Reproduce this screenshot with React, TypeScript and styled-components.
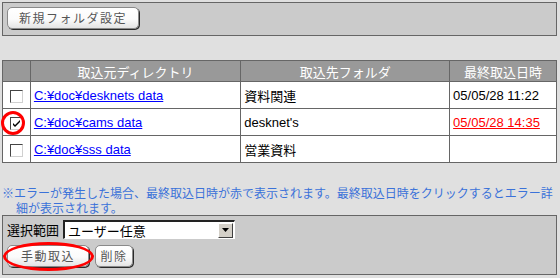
import { FC } from 'react';
import styled, { createGlobalStyle } from 'styled-components';

const GlobalStyle = createGlobalStyle`
	html, body {
		margin: 0;
		padding: 0;
		background: #e0e0e0;
	}
	body {
		font-family: 'Liberation Sans', 'Noto Sans CJK JP', sans-serif;
		font-size: 13px;
		color: #000;
	}
`;

const Page = styled.div`
	width: 560px;
	height: 278px;
	padding: 2px;
	box-sizing: border-box;
	display: flex;
	flex-direction: column;
`;

const Panel = styled.div<{ $gap?: number; $height: number }>`
	width: 555px;
	height: ${(p) => p.$height}px;
	flex-shrink: 0;
	box-sizing: border-box;
	border: 1px solid #666;
	background: #cbcbcb;
	padding: 4px 4px 0 4px;
	display: flex;
	flex-direction: column;
	gap: ${(p) => p.$gap ?? 0}px;
`;

const Row = styled.div<{ $gap: number }>`
	display: flex;
	align-items: center;
	gap: ${(p) => p.$gap}px;
`;

const Button = styled.button<{ $width: number }>`
	position: relative;
	width: ${(p) => p.$width}px;
	height: 22px;
	flex-shrink: 0;
	padding: 0;
	border: 1px solid #8a8a8a;
	border-radius: 5px;
	background: linear-gradient(#ffffff 0%, #fbfbfb 55%, #e4e4e4 100%);
	box-shadow: 1px 1px 0 #2a2a2a;
	font-family: 'Noto Sans CJK JP', sans-serif;
	font-size: 12px;
	letter-spacing: 1.5px;
	color: #555;
	line-height: 20px;
`;

const Table = styled.table`
	margin-top: 24px;
	width: 555px;
	border-collapse: collapse;
	border: 1px solid #666;
	background: #fff;
`;

const HeadCell = styled.th<{ $width: number }>`
	width: ${(p) => p.$width}px;
	height: 20px;
	padding: 0;
	background: #999;
	border: 1px solid #666;
	color: #fff;
	font-family: 'Noto Sans CJK JP', sans-serif;
	font-weight: normal;
	font-size: 13px;
	text-align: center;
`;

const Cell = styled.td<{ $center?: boolean }>`
	position: relative;
	height: 26px;
	padding: 0 0 0 3px;
	border: 1px solid #666;
	text-align: ${(p) => (p.$center ? 'center' : 'left')};
	font-family: 'Liberation Sans', 'Noto Sans CJK JP', sans-serif;
	font-size: 13px;
	white-space: nowrap;
`;

const Box = styled.span`
	display: inline-flex;
	align-items: center;
	justify-content: center;
	width: 13px;
	height: 13px;
	box-sizing: border-box;
	border-top: 1px solid #444;
	border-left: 1px solid #444;
	border-right: 1px solid #d0d0d0;
	border-bottom: 1px solid #d0d0d0;
	background: #fff;
	vertical-align: middle;
	margin-left: -3px;
`;

const Mark = styled.span<{ $left: number; $top: number; $w: number; $h: number }>`
	position: absolute;
	left: ${(p) => p.$left}px;
	top: ${(p) => p.$top}px;
	width: ${(p) => p.$w}px;
	height: ${(p) => p.$h}px;
	box-sizing: border-box;
	border: 3px solid #ff0000;
	border-radius: 50%;
	pointer-events: none;
`;

const PathLink = styled.a`
	color: #0000ff;
	text-decoration: underline;
`;

const DateLink = styled.a`
	color: #ff0000;
	text-decoration: underline;
`;

const Note = styled.p`
	margin: 22px 0 0 0;
	height: 30px;
	padding-left: 14px;
	text-indent: -14px;
	font-family: 'Noto Sans CJK JP', sans-serif;
	font-size: 12px;
	line-height: 15px;
	color: #3b72d9;
	letter-spacing: 0;
`;

const Label = styled.span`
	font-family: 'Noto Sans CJK JP', sans-serif;
	font-size: 13px;
`;

const Select = styled.div`
	width: 172px;
	height: 19px;
	box-sizing: border-box;
	display: flex;
	align-items: center;
	justify-content: space-between;
	background: #fff;
	border-top: 2px solid #222;
	border-left: 2px solid #222;
	border-right: 1px solid #fff;
	border-bottom: 1px solid #fff;
	font-family: 'Noto Sans CJK JP', sans-serif;
	font-size: 13px;
	padding-left: 3px;
`;

const Arrow = styled.span`
	width: 15px;
	height: 15px;
	box-sizing: border-box;
	margin-right: 1px;
	display: flex;
	align-items: center;
	justify-content: center;
	background: #d4d0c8;
	border-top: 1px solid #fff;
	border-left: 1px solid #fff;
	border-right: 1px solid #404040;
	border-bottom: 1px solid #404040;
`;

const Check: FC = () => (
	<svg width="9" height="9" viewBox="0 0 9 9">
		<path d="M1 4 L3 6 L8 1 L8 3 L3 8 L1 6 Z" fill="#000" />
	</svg>
);

const rows = [
	{ path: 'C:¥doc¥desknets data', folder: '資料関連', date: '05/05/28 11:22', error: false, checked: false },
	{ path: 'C:¥doc¥cams data', folder: "desknet's", date: '05/05/28 14:35', error: true, checked: true },
	{ path: 'C:¥doc¥sss data', folder: '営業資料', date: '', error: false, checked: false }
];

const App: FC = () => (
	<>
		<GlobalStyle />
		<Page>
			<Panel $height={34}>
				<Button $width={132}>新規フォルダ設定</Button>
			</Panel>

			<Table>
				<thead>
					<tr>
						<HeadCell $width={27} />
						<HeadCell $width={210}>取込元ディレクトリ</HeadCell>
						<HeadCell $width={209}>取込先フォルダ</HeadCell>
						<HeadCell $width={106}>最終取込日時</HeadCell>
					</tr>
				</thead>
				<tbody>
					{rows.map((r) => (
						<tr key={r.path}>
							<Cell $center>
								<Box>{r.checked && <Check />}</Box>
								{r.checked && <Mark $left={-2} $top={2} $w={24} $h={24} />}
							</Cell>
							<Cell>
								<PathLink href="#">{r.path}</PathLink>
							</Cell>
							<Cell>{r.folder}</Cell>
							<Cell>
								{r.error ? <DateLink href="#">{r.date}</DateLink> : r.date}
							</Cell>
						</tr>
					))}
				</tbody>
			</Table>

			<Note>
				※エラーが発生した場合、最終取込日時が赤で表示されます。最終取込日時をクリックするとエラー詳細が表示されます。
			</Note>

			<Panel $gap={6} $height={60}>
				<Row $gap={4}>
					<Label>選択範囲</Label>
					<Select>
						ユーザー任意
						<Arrow>
							<svg width="7" height="4" viewBox="0 0 7 4">
								<path d="M0 0 H7 L3.5 4 Z" fill="#000" />
							</svg>
						</Arrow>
					</Select>
				</Row>
				<Row $gap={6}>
					<Button $width={82}>
						手動取込
						<Mark $left={-5} $top={-4} $w={91} $h={29} />
					</Button>
					<Button $width={38}>削除</Button>
				</Row>
			</Panel>
		</Page>
	</>
);

export default App;
